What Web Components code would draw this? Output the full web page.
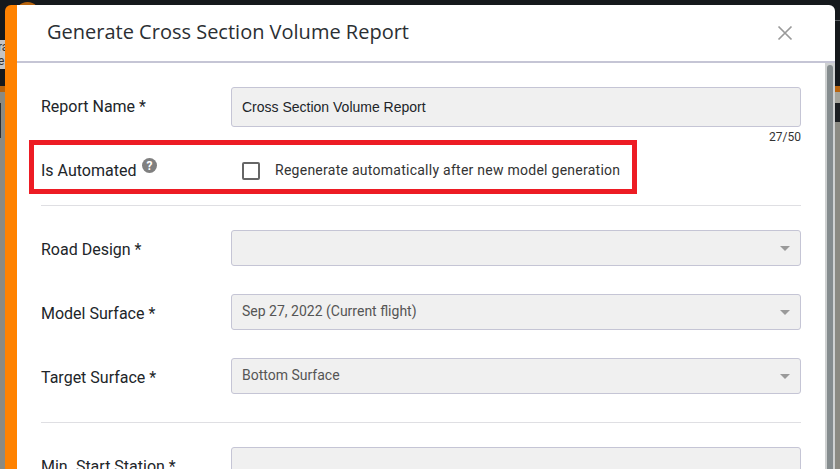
<!DOCTYPE html>
<html><head><meta charset="utf-8"><title>Report</title>
<style>
html,body{margin:0;height:469px;overflow:hidden;background:#8b8a82;font-family:Roboto,sans-serif}
</style></head><body>
<template id="t-backdrop"><style>
:host{display:block;position:relative;width:840px;height:469px;overflow:hidden;background:#8b8a82}
.top{height:86px;background:#15191c}
.orange{height:6px;background:#b8640e}
.tag{position:absolute;left:0;top:40px;width:5px;height:29px;background:#c4c4c4;font:12px/14px Roboto,sans-serif;color:#333;overflow:hidden;white-space:nowrap}
.tag span{display:block;margin-left:-2px}
.avatar{position:absolute;left:15px;top:2px;width:25px;height:25px;border-radius:50%;background:#b8640e}
.dark-l{position:absolute;left:0;top:103px;width:1px;height:35px;background:#2a2d30}
.dark-r{position:absolute;right:0;top:103px;width:5px;height:19px;background:#1c1f22}
.light-r{position:absolute;right:0;top:92px;width:5px;height:11px;background:#a5a49b}
.dash{position:absolute;right:0;top:20px;width:5px;height:1px;background:#5a5f63}
::slotted(*){position:absolute;left:5px;top:5px}
</style><div class="top"></div><div class="orange"></div><div class="avatar"></div><div class="tag"><span>ra</span><span>e</span></div><div class="dark-l"></div><div class="light-r"></div><div class="dark-r"></div><div class="dash"></div><slot></slot></template>

<template id="t-modal"><style>
:host{display:flex;flex-direction:column;width:830px;height:480px;background:#fff;border-left:12px solid #ff8200;border-radius:6px 6px 0 0;box-sizing:border-box;overflow:hidden;color:#212529}
header{flex:none;height:58px;box-sizing:border-box;border-bottom:2px solid #c5c5d5;display:flex;align-items:center;justify-content:space-between;padding:0 42px 2px 30px}
h1{margin:0;font:400 20px/24px "Open Sans",sans-serif;color:#2b2f33}
svg{display:block;margin-top:1px}
.body{flex:1;display:flex;min-height:0}
.content{flex:1;padding:24px 24px 0 24px;box-sizing:border-box;min-width:0}
.bar{flex:none;width:10px;padding:2px 2px 0;box-sizing:border-box;background:#cfd1d1}
.bar i{display:block;width:6px;height:420px;border-radius:3px;background:#858c8e}
</style><header><h1><slot name="title"></slot></h1>
<svg width="16" height="16" viewBox="0 0 16 16" fill="none" stroke="#9a9a9a" stroke-width="1.7"><path d="M1.5 1.5l13 13M14.5 1.5l-13 13"/></svg></header>
<div class="body"><div class="content"><slot></slot></div><div class="bar"><i></i></div></div></template>

<template id="t-row"><style>
:host{display:grid;grid-template-columns:190px 570px;align-items:center;min-height:36px;font:16px/20px Roboto,sans-serif;color:#212529}
.l{white-space:nowrap;margin-top:-1px}
:host([low]) .l{margin-top:3px}
</style><div class="l"><slot name="label"></slot></div><div><slot></slot></div></template>

<template id="t-input"><style>
:host{display:block}
.box{height:40px;box-sizing:border-box;background:#f0f0f0;border:1px solid #c5c5d5;border-radius:3px;padding:0 10px;display:flex;align-items:center;justify-content:space-between;font:14px/18px "Liberation Sans",Arial,sans-serif;color:#212529}
:host([select]) .box{height:36px;color:#555;font-family:Roboto,sans-serif}
:host([select]) span{margin-top:-2px}
.arrow{display:none;width:0;height:0;border:5px solid transparent;border-top-color:#9a9a9a;border-bottom:0}
:host([select]) .arrow{display:block}
</style><div class="box"><span><slot></slot></span><i class="arrow"></i></div></template>

<template id="t-auto"><style>
:host{display:flex;align-items:center;box-sizing:border-box;width:608px;height:54px;margin:0 0 0 -12px;padding:7px 0 0 7px;border:5px solid #ed1c24;font:16px/20px Roboto,sans-serif;color:#212529}
.l{width:201px;display:flex;align-items:flex-start;flex:none}
.q{margin:-3px 0 0 6px}
.cb{box-sizing:border-box;width:18px;height:18px;margin:1px 15px 0 0;border:2px solid #666;border-radius:2px;flex:none;background:#fff}
.t{font:14px/18px Roboto,sans-serif;letter-spacing:.26px;white-space:nowrap;color:#333;margin-top:-2px}
svg{display:block}
</style><div class="l"><slot name="label"></slot><svg class="q" width="15" height="15" viewBox="0 0 15 15"><circle cx="7.5" cy="7.5" r="7.5" fill="#808080"/><text x="7.5" y="12" text-anchor="middle" font-family="Roboto" font-weight="700" font-size="12" fill="#fff">?</text></svg></div><span class="cb"></span><span class="t"><slot></slot></span></template>

<template id="t-rule"><style>:host{display:block;height:1px;background:#dfdfe3}</style></template>

<vol-backdrop>
<vol-modal>
<span slot="title">Generate Cross Section Volume Report</span>
<vol-row><span slot="label">Report Name *</span><vol-input>Cross Section Volume Report</vol-input></vol-row>
<div style="text-align:right;width:760px;font:12px/14px Roboto,sans-serif;color:#333;margin:3px 0 -4px">27/50</div>
<vol-auto><span slot="label">Is Automated</span>Regenerate automatically after new model generation</vol-auto>
<vol-rule style="margin-top:11px"></vol-rule>
<vol-row low style="margin-top:24px"><span slot="label">Road Design *</span><vol-input select></vol-input></vol-row>
<vol-row low style="margin-top:28px"><span slot="label">Model Surface *</span><vol-input select>Sep 27, 2022 (Current flight)</vol-input></vol-row>
<vol-row low style="margin-top:28px"><span slot="label">Target Surface *</span><vol-input select>Bottom Surface</vol-input></vol-row>
<vol-rule style="margin-top:28px"></vol-rule>
<vol-row style="margin-top:24px"><span slot="label">Min. Start Station *</span><vol-input></vol-input></vol-row>
</vol-modal>
</vol-backdrop>
<script>
for (const [tag, id] of [['vol-backdrop','t-backdrop'],['vol-modal','t-modal'],['vol-row','t-row'],['vol-input','t-input'],['vol-auto','t-auto'],['vol-rule','t-rule']]) {
  customElements.define(tag, class extends HTMLElement {
    constructor(){super();this.attachShadow({mode:'open'}).appendChild(document.getElementById(id).content.cloneNode(true));}
  });
}
</script>
</body></html>
